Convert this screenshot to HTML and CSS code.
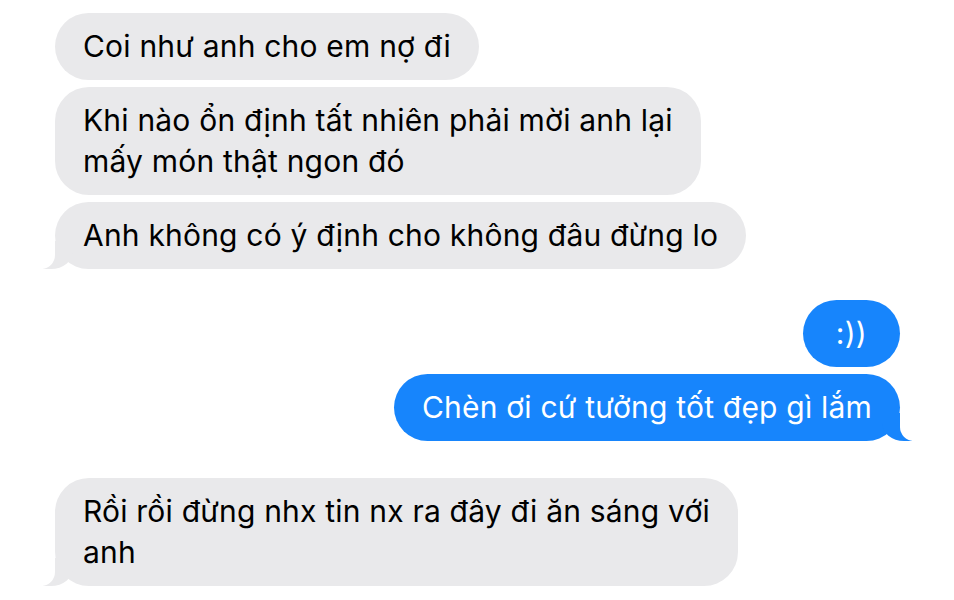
FILE: index.html
```html
<!DOCTYPE html>
<html>
<head>
    <title>Tin nhắn</title>
    <link rel="stylesheet" href="styles.css">
</head>
<body>

    <div class="chat">
        <div class="bubble them">Coi như anh cho em nợ đi</div>
        <div class="bubble them">Khi nào ổn định tất nhiên phải mời anh lại<br>mấy món thật ngon đó</div>
        <div class="bubble them last">Anh không có ý định cho không đâu đừng lo</div>

        <div class="bubble me short group-start">:))</div>
        <div class="bubble me last">Chèn ơi cứ tưởng tốt đẹp gì lắm</div>

        <div class="bubble them last wide-gap">Rồi rồi đừng nhx tin nx ra đây đi ăn sáng với<br>anh</div>
    </div>

</body>
</html>
```

FILE: styles.css
```css
body {
    margin: 0;
    background: #ffffff;
    font-family: Inter, "Liberation Sans", sans-serif;
}

.chat {
    display: flex;
    flex-direction: column;
    gap: 7px;
    padding-top: 13px;
}

.bubble {
    position: relative;
    z-index: 0;
    padding: 13px 28px;
    font-size: 30px;
    line-height: 41px;
    letter-spacing: 0.2px;
    border-radius: 34px;
    white-space: nowrap;
}

.them {
    align-self: flex-start;
    margin-left: 55px;
    background: #e9e9eb;
    color: #000000;
}

.me {
    align-self: flex-end;
    margin-right: 54px;
    background: #1785fc;
    color: #ffffff;
}

.me.short { padding: 13px 33px; }

.group-start { margin-top: 24px; }
.wide-gap { margin-top: 30px; }

/* tails */
.bubble.last::before,
.bubble.last::after {
    content: "";
    position: absolute;
    bottom: 0;
    height: 28px;
}

.them.last::before {
    z-index: -1;
    left: -12px;
    width: 30px;
    background: #e9e9eb;
    border-bottom-right-radius: 22px 18px;
}

.them.last::after {
    z-index: -1;
    left: -30px;
    width: 30px;
    background: #ffffff;
    border-bottom-right-radius: 14px;
}

.me.last::before {
    z-index: -1;
    right: -12px;
    width: 30px;
    background: #1785fc;
    border-bottom-left-radius: 22px 18px;
}

.me.last::after {
    z-index: -1;
    right: -30px;
    width: 30px;
    background: #ffffff;
    border-bottom-left-radius: 14px;
}
```
